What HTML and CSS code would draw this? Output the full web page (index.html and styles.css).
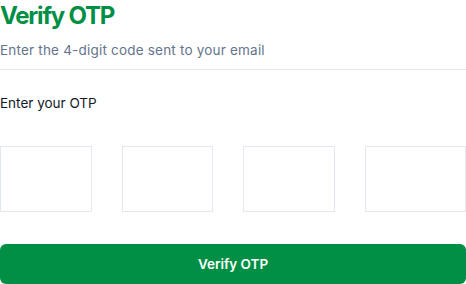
FILE: index.html
```html
<!doctype html>
<html lang="en">
<head>
  <meta charset="utf-8"/>
  <title>Verify OTP</title>
  <link rel="stylesheet" href="styles.css">
</head>
<body>
<div class="card">
  <div class="head">
    <h1>Verify OTP</h1>
    <p class="sub">Enter the 4-digit code sent to your email</p>
  </div>

  <label class="label" for="otp-1">Enter your OTP</label>
  <div class="otp-row">
    <input class="otp" id="otp-1" type="text" maxlength="1" inputmode="numeric"/>
    <input class="otp" type="text" maxlength="1" inputmode="numeric"/>
    <input class="otp" type="text" maxlength="1" inputmode="numeric"/>
    <input class="otp" type="text" maxlength="1" inputmode="numeric"/>
  </div>

  <button class="verify-btn">Verify OTP</button>
</div>
</body>
</html>
```

FILE: styles.css
```css
:root{
  --green:#008f44;--border:#e2e8f0;--muted:#64748b;--text:#111827;
}
*{box-sizing:border-box}
body{margin:0;font-family:Inter,"Noto Sans",sans-serif;color:var(--text);background:#fff}
.card{width:466px}
.head{padding-top:1px;padding-bottom:9px;border-bottom:1px solid var(--border)}
h1{margin:0;font-size:24px;line-height:30px;font-weight:700;color:var(--green);letter-spacing:-1.2px}
.sub{margin:9px 0 0;font-size:13.5px;line-height:20px;color:var(--muted);letter-spacing:.2px}
.label{display:block;margin-top:23px;font-size:13.5px;line-height:20px}
.otp-row{display:grid;grid-template-columns:92px 91px 92px 1fr;gap:30px;margin-top:33px}
.otp{height:66px;width:100%;border:1px solid var(--border);border-radius:0;
  font-size:24px;text-align:center;outline:none;background:#fff}
.verify-btn{display:block;width:100%;height:40px;margin-top:32px;border:none;border-radius:6px;
  background:var(--green);color:#fff;font-family:inherit;font-size:13.5px;font-weight:600;cursor:pointer}
```
